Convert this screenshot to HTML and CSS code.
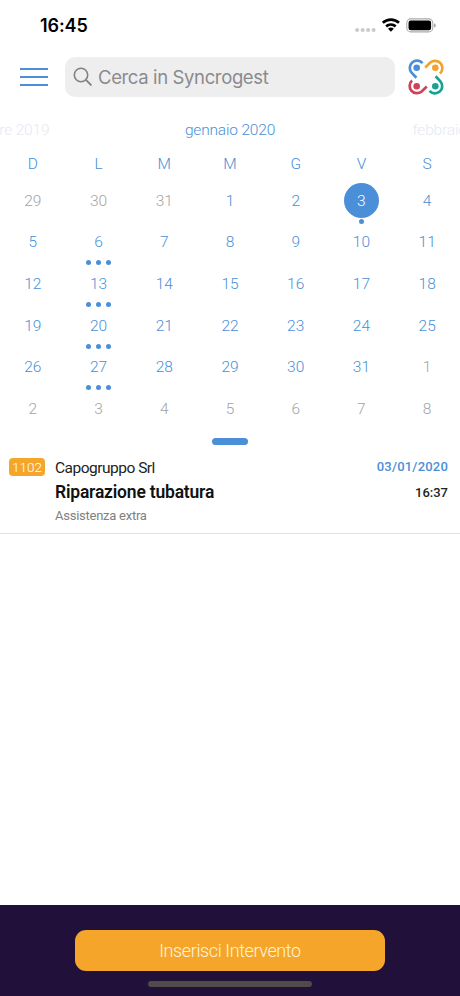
FILE: index.html
```html
<!DOCTYPE html>
<html lang="it">
<head>
<meta charset="utf-8">
<title>Syncrogest</title>
<link rel="stylesheet" href="styles.css">
</head>
<body>
<div class="screen">
  <div class="status">
    <span class="clock">16:45</span>
    <svg class="indicators" width="84" height="20" viewBox="0 0 84 20">
      <g fill="#cacaca"><circle cx="4.1" cy="15" r="2"/><circle cx="9.6" cy="15" r="2"/><circle cx="15.1" cy="15" r="2"/><circle cx="20.6" cy="15" r="2"/></g>
      <g fill="none" stroke="#000" stroke-width="2.7"><path d="M29.8 7.8a12 12 0 0 1 16.2 0"/><path d="M33.1 11.4a7.4 7.4 0 0 1 9.6 0"/></g>
      <path d="M35 13.8a4.2 4.2 0 0 1 5.8 0l-2.9 3z"/>
      <rect x="53.8" y="3.9" width="26" height="13" rx="4" fill="none" stroke="#aaa" stroke-width="1.1"/>
      <rect x="55.5" y="5.6" width="22.6" height="9.6" rx="2.2"/>
      <path d="M81.1 8.2q1.6.8 1.6 2.3t-1.6 2.3z" fill="#999"/>
    </svg>
  </div>
  <header class="toolbar">
    <div class="menu"><i></i><i></i><i></i></div>
    <div class="search">
      <svg width="20" height="20" viewBox="0 0 20 20" fill="none" stroke="#828286" stroke-width="1.6" stroke-linecap="round"><circle cx="8" cy="8" r="6.7"/><path d="M12.9 12.9l5 5" stroke-width="1.9"/></svg>
      <span>Cerca in Syncrogest</span>
    </div>
    <svg class="logo" width="38" height="38" viewBox="-19 -19 38 38">
      <defs><g id="arm"><path d="M-3.5-13.9A7.2 7.2 0 1 0-14.4-4.3L-9.6.8" fill="none" stroke="currentColor" stroke-width="2.7"/><circle cx="-9.3" cy="-9.3" r="3.3" fill="currentColor"/></g></defs>
      <use href="#arm" color="#4a8fd8"/>
      <use href="#arm" color="#f2a32e" transform="rotate(90)"/>
      <use href="#arm" color="#17a392" transform="rotate(180)"/>
      <use href="#arm" color="#cf4356" transform="rotate(270)"/>
    </svg>
  </header>
  <div class="months"><span class="prev">dicembre 2019</span><span class="current">gennaio 2020</span><span class="next">febbraio 2020</span></div>
  <div class="week"><span>D</span><span>L</span><span>M</span><span>M</span><span>G</span><span>V</span><span>S</span></div>
  <div class="days">
    <span class="out">29</span><span class="out">30</span><span class="out">31</span><span>1</span><span>2</span><span class="selected"><b>3</b><em><i></i></em></span><span>4</span>
    <span>5</span><span>6<em><i></i><i></i><i></i></em></span><span>7</span><span>8</span><span>9</span><span>10</span><span>11</span>
    <span>12</span><span>13<em><i></i><i></i><i></i></em></span><span>14</span><span>15</span><span>16</span><span>17</span><span>18</span>
    <span>19</span><span>20<em><i></i><i></i><i></i></em></span><span>21</span><span>22</span><span>23</span><span>24</span><span>25</span>
    <span>26</span><span>27<em><i></i><i></i><i></i></em></span><span>28</span><span>29</span><span>30</span><span>31</span><span class="out">1</span>
    <span class="out">2</span><span class="out">3</span><span class="out">4</span><span class="out">5</span><span class="out">6</span><span class="out">7</span><span class="out">8</span>
  </div>
  <div class="handle"></div>
  <article class="job">
    <span class="badge">1102</span>
    <div class="details"><div class="client">Capogruppo Srl</div><div class="title">Riparazione tubatura</div><div class="kind">Assistenza extra</div></div>
    <div class="when"><div class="date">03/01/2020</div><div class="time">16:37</div></div>
  </article>
  <footer class="footer">
    <div class="button">Inserisci Intervento</div>
    <div class="home"></div>
  </footer>
</div>
</body>
</html>
```
FILE: styles.css
```css
* { box-sizing: border-box; }
body { margin: 0; background: #fff; font-family: Roboto, sans-serif; }
.screen { width: 460px; height: 996px; display: flex; flex-direction: column; overflow: hidden; }
.status { height: 57px; flex: none; display: flex; justify-content: space-between; padding: 15px 24px 0 40px; }
.clock { font: 600 18px/22px Inter, sans-serif; letter-spacing: -0.1px; }
.indicators { margin-right: -1px; }
.toolbar { height: 40px; flex: none; display: flex; align-items: center; padding: 0 15px 0 20px; }
.menu { width: 28px; display: flex; flex-direction: column; gap: 6px; margin-right: 17px; }
.menu i { height: 2px; background: #4a8fd8; }
.search { width: 330px; height: 40px; background: #eee; border-radius: 10px; display: flex; align-items: center; padding-left: 8px; gap: 5px; font: 18.5px/24px Inter, sans-serif; letter-spacing: -0.37px; color: #8a8a8e; white-space: nowrap; }
.logo { margin-left: 12px; flex: none; }
.months { height: 46px; flex: none; display: grid; grid-template-columns: 1fr 1fr 1fr; align-items: center; text-align: center; font-size: 15.5px; line-height: 20px; font-weight: 350; letter-spacing: -0.18px; padding-top: 20px; color: #4a8fd8; white-space: nowrap; }
.prev, .next { color: #e4e9f5; }
.prev { justify-self: start; margin-left: -50px; }
.next { justify-self: end; margin-right: -44px; }
.week { height: 37px; padding-top: 11px; flex: none; display: grid; grid-template-columns: repeat(7, 1fr); text-align: center; font-size: 15.5px; line-height: 20px; font-weight: 350; color: #4a8fd8; }
.days { height: 250px; flex: none; display: grid; grid-template: repeat(6, 1fr) / repeat(7, 1fr); font-size: 15.5px; line-height: 20px; font-weight: 300; color: #4a8fd8; }
.days > span { position: relative; display: flex; align-items: center; justify-content: center; }
.days .out { color: #a3a3a3; }
.days b { width: 35px; height: 35px; border-radius: 50%; background: #4a8fd8; color: #fff; font-weight: 300; display: flex; align-items: center; justify-content: center; }
.days em { position: absolute; left: 0; right: 0; bottom: -2px; display: flex; justify-content: center; gap: 4.6px; }
.days em i { width: 5px; height: 5px; border-radius: 50%; background: #4a8fd8; }
.handle { width: 36px; height: 7px; flex: none; align-self: center; margin: 8px 0 12px; border-radius: 3.5px; background: #4a8fd8; }
.job { height: 77px; flex: none; display: flex; padding: 0 12px 0 9px; border-bottom: 1px solid #e2e2e2; white-space: nowrap; }
.badge { width: 36px; height: 18px; margin-top: 1px; border-radius: 4px; background: #f5a62a; color: #fff; font-size: 13.5px; font-weight: 300; line-height: 19px; text-align: center; }
.details { flex: 1; margin-left: 10px; }
.client { font-size: 15.5px; line-height: 22px; font-weight: 400; letter-spacing: -0.5px; color: #222; }
.title { font-size: 17.5px; line-height: 26px; font-weight: 600; letter-spacing: -0.2px; color: #111; }
.kind { font-size: 13px; line-height: 22px; font-weight: 400; letter-spacing: -0.25px; color: #808080; }
.when { text-align: right; font-size: 13px; font-weight: 600; }
.date { line-height: 20px; letter-spacing: 0.2px; font-weight: 500; color: #4a8fd8; }
.time { line-height: 20px; margin-top: 6px; font-weight: 500; color: #222; }
.footer { margin-top: auto; height: 91px; flex: none; display: flex; flex-direction: column; align-items: center; background: #20103a; padding-top: 25px; }
.button { width: 310px; height: 41px; border-radius: 11px; background: #f5a62a; color: #fff3dc; font-size: 18px; line-height: 42px; font-weight: 300; letter-spacing: -0.4px; text-align: center; }
.home { width: 164px; height: 6px; margin-top: 10px; border-radius: 3px; background: #504b4a; }
```
